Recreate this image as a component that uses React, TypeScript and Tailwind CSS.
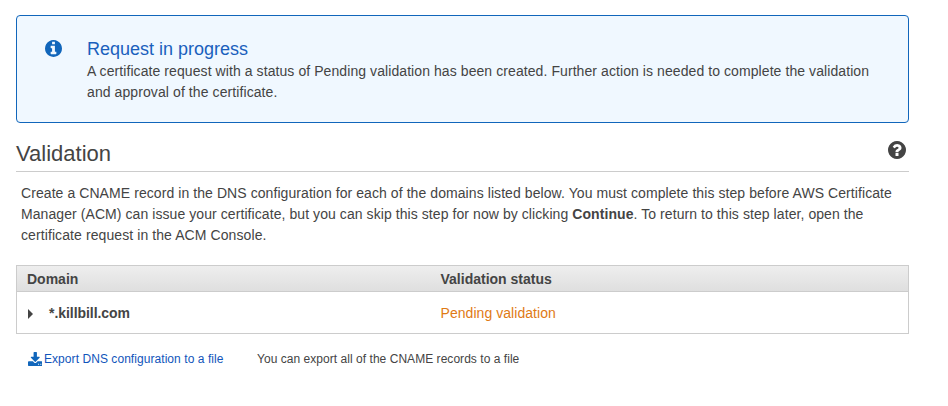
const CIRCLE =
  'M1664 896q0 209-103 385.5t-279.5 279.5-385.5 103-385.5-103-279.5-279.5-103-385.5 103-385.5 279.5-279.5 385.5-103 385.5 103 279.5 279.5 103 385.5z';

function InfoIcon() {
  return (
    <svg viewBox="128 128 1536 1536" className="mt-[24px] ml-[27.5px] h-[17px] w-[17px] shrink-0 fill-[#1166bb]">
      <path
        fillRule="evenodd"
        d={
          'M1152 1376v-160q0-14-9-23t-23-9h-96v-512q0-14-9-23t-23-9h-320q-14 0-23 9t-9 23v160q0 14 9 23t23 9h96v320h-96q-14 0-23 9t-9 23v160q0 14 9 23t23 9h448q14 0 23-9t9-23zm-128-896v-160q0-14-9-23t-23-9h-192q-14 0-23 9t-9 23v160q0 14 9 23t23 9h192q14 0 23-9t9-23z' +
          CIRCLE
        }
      />
    </svg>
  );
}

function HelpIcon() {
  return (
    <svg viewBox="128 128 1536 1536" className="mt-[18px] mr-[3px] h-[18px] w-[18px] fill-[#444444]">
      <path
        fillRule="evenodd"
        d={
          'M1024 1376v-192q0-14-9-23t-23-9h-192q-14 0-23 9t-9 23v192q0 14 9 23t23 9h192q14 0 23-9t9-23zm256-672q0-88-55.5-163t-138.5-116-170-41q-243 0-371 213-15 24 8 42l132 100q7 6 19 6 16 0 25-12 53-68 86-92 34-24 86-24 48 0 85.5 26t37.5 59q0 38-20 61t-68 45q-63 28-115.5 86.5t-52.5 125.5v36q0 14 9 23t23 9h192q14 0 23-9t9-23q0-19 21.5-49.5t54.5-49.5q32-18 49-28.5t46-35 44.5-48 28-60.5 12.5-81z' +
          CIRCLE
        }
      />
    </svg>
  );
}

function DownloadIcon() {
  return (
    <svg viewBox="0 0 1664 1536" preserveAspectRatio="none" className="h-[14px] w-[14.5px] fill-[#1166bb]">
      <path d="M1280 1344q0-26-19-45t-45-19-45 19-19 45 19 45 45 19 45-19 19-45zm256 0q0-26-19-45t-45-19-45 19-19 45 19 45 45 19 45-19 19-45zm128-224v320q0 40-28 68t-68 28h-1472q-40 0-68-28t-28-68v-320q0-40 28-68t68-28h465l135 136q58 56 136 56t136-56l136-136h464q40 0 68 28t28 68zm-325-569q17 41-14 70l-448 448q-18 19-45 19t-45-19l-448-448q-31-29-14-70 17-39 59-39h256v-448q0-26 19-45t45-19h256q26 0 45 19t19 45v448h256q42 0 59 39z" />
    </svg>
  );
}

export default function App() {
  return (
    <main className="h-[406px] w-[948px] bg-white pt-[15px] pl-4 font-['Liberation_Sans',Arial,sans-serif] text-[14px] leading-[21px] whitespace-nowrap text-[#444444]">
      <div className="w-[893px]">
        <section className="flex h-[108px] rounded border border-[#1166bb] bg-[#f0f8ff]">
          <InfoIcon />
          <div className="ml-[25.5px] pt-[22px]">
            <h2 className="text-[18px] leading-[23px] text-[#1a60bd]">Request in progress</h2>
            <p className="tracking-[0.079px]">A certificate request with a status of Pending validation has been created. Further action is needed to complete the validation</p>
            <p className="tracking-[0.09px]">and approval of the certificate.</p>
          </div>
        </section>

        <header className="flex h-[49px] justify-between border-b border-[#cccccc]">
          <h1 className="pt-[17px] text-[22px] leading-[27px]">Validation</h1>
          <HelpIcon />
        </header>

        <div className="pt-[11px] pl-[5px] tracking-[0.074px]">
          <p>Create a CNAME record in the DNS configuration for each of the domains listed below. You must complete this step before AWS Certificate</p>
          <p>Manager (ACM) can issue your certificate, but you can skip this step for now by clicking <b>Continue</b>. To return to this step later, open the</p>
          <p className="tracking-[0.09px]">certificate request in the ACM Console.</p>
        </div>

        <section className="mt-[19px] h-[69px] border border-[#cccccc]">
          <div className="flex h-[26px] border-b border-[#cccccc] bg-linear-to-b from-[#eeeeee] to-[#dfdfdf] pt-[3px] pl-[10px] font-bold">
            <div className="w-[413.5px]">Domain</div>
            <div>Validation status</div>
          </div>
          <div className="flex pt-[11px] pl-[11px]">
            <svg viewBox="0 0 5 10" className="mt-[6px] h-[10px] w-[5px] fill-[#444444]">
              <path d="M0 0L5 5L0 10Z" />
            </svg>
            <div className="ml-4 w-[391.5px] font-bold tracking-[-0.05px]">*.killbill.com</div>
            <div className="tracking-[0.05px] text-[#e07a14]">Pending validation</div>
          </div>
        </section>

        <footer className="flex pt-[15px] pl-[11.5px] text-[12px]">
          <div className="flex w-[229.5px] text-[#1155bb]">
            <div className="w-[16.5px] pt-[3px]">
              <DownloadIcon />
            </div>
            <span className="tracking-[0.06px]">Export DNS configuration to a file</span>
          </div>
          <span className="tracking-[0.04px]">You can export all of the CNAME records to a file</span>
        </footer>
      </div>
    </main>
  );
}
